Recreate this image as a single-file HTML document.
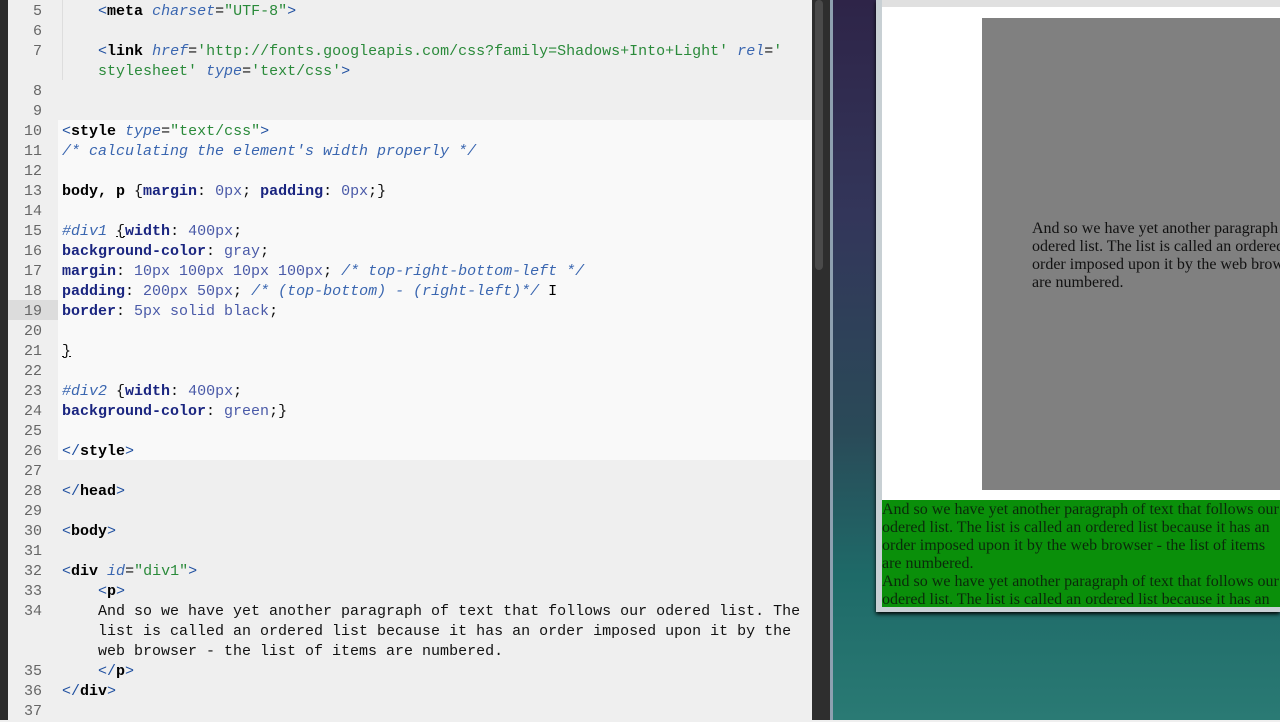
<!DOCTYPE html>
<html><head><meta charset="utf-8"><style>
*{margin:0;padding:0}
body{width:1280px;height:720px;overflow:hidden;position:relative;background:#efefef;font-family:"Liberation Mono",monospace;font-size:15px}
.g{position:absolute;left:0;top:0;width:8px;height:720px;background:#2b2b2b}
.hl{position:absolute;left:58px;top:120px;width:754px;height:340px;background:#f9f9f9}
.ln{position:absolute;left:8px;width:34px;text-align:right;color:#666;line-height:20px;margin-top:2px}
.c{position:absolute;left:62px;line-height:20px;white-space:pre;color:#111;margin-top:2px}
.t{color:#000;font-weight:bold}.p{color:#224}.a{color:#3a66b0;font-style:italic}.s{color:#2a8a3a}
.k{color:#1a2580;font-weight:bold}.v{color:#4a5aa8}.cm{color:#3a66b0;font-style:italic}
.br{color:#2050a0}
</style></head><body>
<div class="g"></div>
<div class="hl"></div>
<div style="position:absolute;left:8px;top:300px;width:50px;height:20px;background:#dcdcdc"></div>
<div style="position:absolute;left:62px;top:0;width:1px;height:80px;background:#ddd"></div>
<div class="ln" style="top:0">5</div><div class="ln" style="top:20px">6</div><div class="ln" style="top:40px">7</div>
<div class="ln" style="top:80px">8</div><div class="ln" style="top:100px">9</div><div class="ln" style="top:120px">10</div>
<div class="ln" style="top:140px">11</div><div class="ln" style="top:160px">12</div><div class="ln" style="top:180px">13</div>
<div class="ln" style="top:200px">14</div><div class="ln" style="top:220px">15</div><div class="ln" style="top:240px">16</div>
<div class="ln" style="top:260px">17</div><div class="ln" style="top:280px">18</div><div class="ln" style="top:300px">19</div>
<div class="ln" style="top:320px">20</div><div class="ln" style="top:340px">21</div><div class="ln" style="top:360px">22</div>
<div class="ln" style="top:380px">23</div><div class="ln" style="top:400px">24</div><div class="ln" style="top:420px">25</div>
<div class="ln" style="top:440px">26</div><div class="ln" style="top:460px">27</div><div class="ln" style="top:480px">28</div>
<div class="ln" style="top:500px">29</div><div class="ln" style="top:520px">30</div><div class="ln" style="top:540px">31</div>
<div class="ln" style="top:560px">32</div><div class="ln" style="top:580px">33</div><div class="ln" style="top:600px">34</div>
<div class="ln" style="top:660px">35</div><div class="ln" style="top:680px">36</div><div class="ln" style="top:700px">37</div>
<div class="c" style="top:0">    <span class="br">&lt;</span><span class="t">meta</span> <span class="a">charset</span>=<span class="s">"UTF-8"</span><span class="br">&gt;</span></div>
<div class="c" style="top:40px">    <span class="br">&lt;</span><span class="t">link</span> <span class="a">href</span>=<span class="s">'http://fonts.googleapis.com/css?family=Shadows+Into+Light'</span> <span class="a">rel</span>=<span class="s">'</span>
<span class="s">    stylesheet'</span> <span class="a">type</span>=<span class="s">'text/css'</span><span class="br">&gt;</span></div>
<div class="c" style="top:120px"><span class="br">&lt;</span><span class="t">style</span> <span class="a">type</span>=<span class="s">"text/css"</span><span class="br">&gt;</span>
<span class="cm">/* calculating the element's width properly */</span>

<span class="t">body, p</span> {<span class="k">margin</span>: <span class="v">0px</span>; <span class="k">padding</span>: <span class="v">0px</span>;}

<span class="a">#div1</span> <u>{</u><span class="k">width</span>: <span class="v">400px</span>;
<span class="k">background-color</span>: <span class="v">gray</span>;
<span class="k">margin</span>: <span class="v">10px 100px 10px 100px</span>; <span class="cm">/* top-right-bottom-left */</span>
<span class="k">padding</span>: <span class="v">200px 50px</span>; <span class="cm">/* (top-bottom) - (right-left)*/</span> <span style="color:#000">I</span>
<span class="k">border</span>: <span class="v">5px solid black</span>;

<u>}</u>

<span class="a">#div2</span> {<span class="k">width</span>: <span class="v">400px</span>;
<span class="k">background-color</span>: <span class="v">green</span>;}

<span class="br">&lt;/</span><span class="t">style</span><span class="br">&gt;</span>

<span class="br">&lt;/</span><span class="t">head</span><span class="br">&gt;</span>

<span class="br">&lt;</span><span class="t">body</span><span class="br">&gt;</span>

<span class="br">&lt;</span><span class="t">div</span> <span class="a">id</span>=<span class="s">"div1"</span><span class="br">&gt;</span>
    <span class="br">&lt;</span><span class="t">p</span><span class="br">&gt;</span>
    And so we have yet another paragraph of text that follows our odered list. The
    list is called an ordered list because it has an order imposed upon it by the
    web browser - the list of items are numbered.
    <span class="br">&lt;/</span><span class="t">p</span><span class="br">&gt;</span>
<span class="br">&lt;/</span><span class="t">div</span><span class="br">&gt;</span></div>
<div style="position:absolute;left:812px;top:0;width:18px;height:720px;background:#2e2e2e"></div>
<div style="position:absolute;left:815px;top:0;width:8px;height:270px;background:#4a4a4a;border-radius:4px"></div>
<div style="position:absolute;left:830px;top:0;width:450px;height:720px;background:linear-gradient(180deg,#2e2448 0%,#33365a 30%,#2a4a58 60%,#1e6a68 80%,#2a7a74 100%)"></div>
<div style="position:absolute;left:830px;top:0;width:3px;height:720px;background:#8ea0b0"></div>
<div style="position:absolute;left:876px;top:0;width:404px;height:612px;background:#c8d0d4;box-shadow:0 2px 4px #000"></div>
<div style="position:absolute;left:882px;top:0;width:398px;height:7px;background:#e0e0e0"></div>
<div style="position:absolute;left:882px;top:7px;width:398px;height:600px;background:#fff;overflow:hidden;font-family:'Liberation Serif',serif;font-size:16px;line-height:18px;color:#111">
<div style="position:absolute;left:100px;top:11px;width:400px;height:472px;background:#808080"><div style="position:absolute;left:50px;top:202px;width:400px">And so we have yet another paragraph of text that follows our odered list. The list is called an ordered list because it has an order imposed upon it by the web browser - the list of items are numbered.</div></div>
<div style="position:absolute;left:0;top:493px;width:400px;height:110px;background:#0a8f0a;color:#0a2a0a;white-space:nowrap;padding-top:1px">And so we have yet another paragraph of text that follows our<br>odered list. The list is called an ordered list because it has an<br>order imposed upon it by the web browser - the list of items<br>are numbered.<br>And so we have yet another paragraph of text that follows our<br>odered list. The list is called an ordered list because it has an</div>
</div>
</body></html>
